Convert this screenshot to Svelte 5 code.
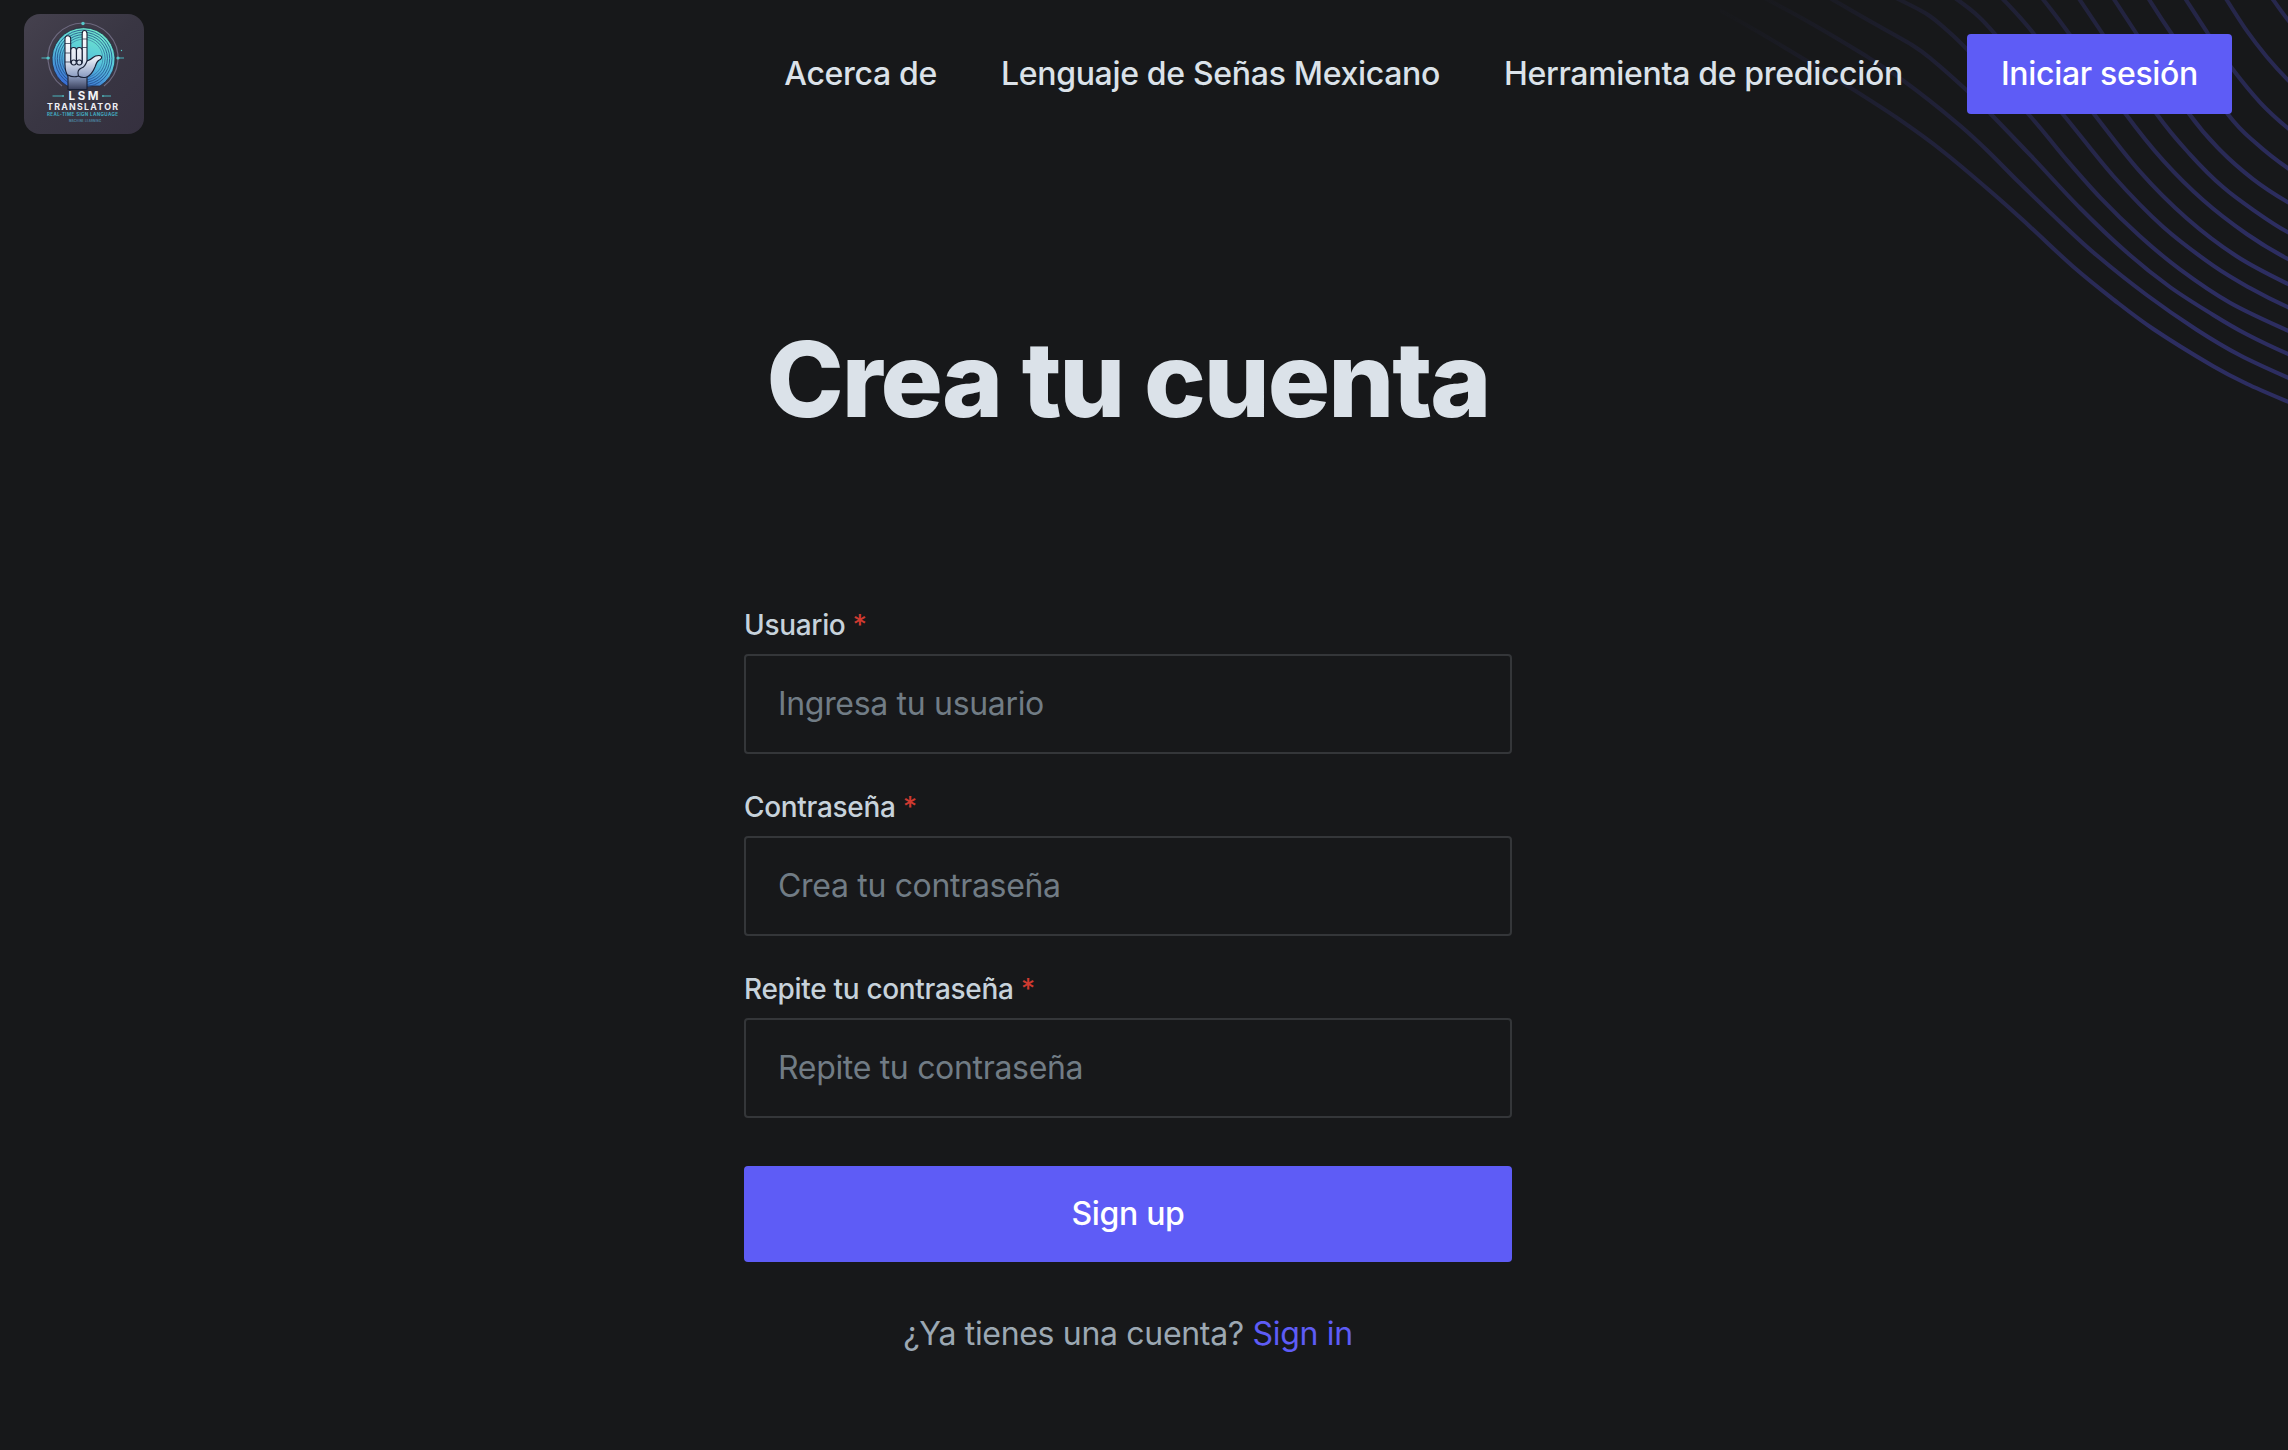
<script>
  const links = ['Acerca de', 'Lenguaje de Señas Mexicano', 'Herramienta de predicción'];
  const fields = [
    { id: 'user', label: 'Usuario', hint: 'Ingresa tu usuario', type: 'text' },
    { id: 'pass', label: 'Contraseña', hint: 'Crea tu contraseña', type: 'password' },
    { id: 'again', label: 'Repite tu contraseña', hint: 'Repite tu contraseña', type: 'password' }
  ];

  // Contour lines, in thirds of a pixel from the illustration's left edge.
  const contours = [
    [[-320, -45], [-220, 10], [-110, 70], [60, 170], [190, 250], [350, 353], [490, 455], [650, 590], [750, 680], [880, 800], [1000, 898], [1120, 987], [1300, 1099], [1400, 1151], [1524, 1205], [1600, 1235]],
    [[-120, -48], [-35, 0], [90, 68], [250, 163], [370, 242], [530, 368], [620, 450], [720, 550], [850, 675], [950, 766], [1100, 885], [1250, 989], [1380, 1066], [1524, 1133], [1600, 1163]],
    [[140, -12], [160, 0], [260, 58], [395, 134], [460, 182], [560, 271], [632, 342], [760, 475], [900, 624], [1040, 757], [1170, 861], [1300, 945], [1400, 1003], [1524, 1062], [1600, 1092]],
    [[340, -10], [440, 42], [500, 90], [560, 147], [745, 342], [850, 468], [960, 592], [1080, 709], [1200, 808], [1350, 908], [1524, 992], [1600, 1022]],
    [[520, -10], [585, 40], [645, 102], [848, 342], [1000, 528], [1150, 681], [1300, 797], [1410, 864], [1524, 922], [1600, 952]],
    [[662, -10], [762, 102], [942, 342], [1080, 515], [1220, 655], [1370, 769], [1524, 852], [1600, 882]],
    [[783, -10], [868, 102], [1037, 342], [1150, 482], [1270, 601], [1400, 702], [1524, 777], [1600, 807]],
    [[893, -10], [968, 102], [1130, 342], [1230, 463], [1330, 562], [1430, 637], [1524, 697], [1600, 730]],
    [[997, -10], [1070, 102], [1228, 342], [1320, 450], [1420, 538], [1524, 607], [1600, 645]],
    [[1102, -10], [1175, 102], [1343, 342], [1430, 431], [1524, 505], [1600, 550]],
    [[1212, -10], [1285, 102], [1356, 205], [1440, 307], [1524, 385], [1600, 440]],
    [[1334, -10], [1400, 92], [1460, 170], [1524, 240], [1600, 310]],
    [[1473, -10], [1524, 60], [1600, 150]]
  ];

  // Smooth curve through every point of a contour.
  function smooth(points) {
    const p = points.map(([x, y]) => [x / 3 + 60, y / 3]);
    let d = `M${p[0][0].toFixed(1)} ${p[0][1].toFixed(1)}`;
    for (let i = 0; i < p.length - 1; i++) {
      const a = p[i];
      const b = p[i + 1];
      const before = p[i - 1] ?? a;
      const after = p[i + 2] ?? b;
      const c = [
        a[0] + (b[0] - before[0]) / 6, a[1] + (b[1] - before[1]) / 6,
        b[0] - (after[0] - a[0]) / 6, b[1] - (after[1] - a[1]) / 6,
        b[0], b[1]
      ];
      d += 'C' + c.map((v) => v.toFixed(1)).join(' ');
    }
    return d;
  }
</script>

<div class="page">
  <svg class="waves" width="568" height="440" viewBox="0 0 568 440" aria-hidden="true">
    <defs>
      <linearGradient id="fade" gradientUnits="userSpaceOnUse" x1="90" y1="-60" x2="460" y2="310">
        <stop offset="0" stop-color="#5d5dff" stop-opacity="0.01" />
        <stop offset="1" stop-color="#5d5dff" stop-opacity="0.31" />
      </linearGradient>
    </defs>
    {#each contours as line}
      <path d={smooth(line)} fill="none" stroke="url(#fade)" stroke-width="4" />
    {/each}
  </svg>

  <header>
    <svg class="logo" viewBox="0 0 120 120" role="img" aria-label="LSM Translator">
      <defs>
        <linearGradient id="tile" x1="0" y1="0" x2="1" y2="1">
          <stop offset="0" stop-color="#45414e" />
          <stop offset="0.5" stop-color="#393643" />
          <stop offset="1" stop-color="#35303f" />
        </linearGradient>
        <linearGradient id="disc" x1="0.75" y1="0" x2="0.35" y2="1">
          <stop offset="0" stop-color="#74ecc6" />
          <stop offset="0.5" stop-color="#58c8dc" />
          <stop offset="1" stop-color="#3a6fd4" />
        </linearGradient>
        <linearGradient id="hand" gradientUnits="userSpaceOnUse" x1="0" y1="17" x2="0" y2="76">
          <stop offset="0" stop-color="#ffffff" />
          <stop offset="0.5" stop-color="#dfe6f2" />
          <stop offset="0.75" stop-color="#93a3c6" />
          <stop offset="1" stop-color="#343a56" />
        </linearGradient>
      </defs>
      <rect width="120" height="120" rx="16" fill="url(#tile)" />
      <path d="M38 72A35 35 0 1 1 80 72" fill="none" stroke="#6d697f" stroke-width="1.2" />
      <path d="M43 72A31.500 31.500 0 1 1 76 72Z" fill="url(#disc)" stroke="#20283f" stroke-width="0.800" />
      <g fill="none" stroke="#214a86" stroke-width="0.8">
        <circle cx="59.500" cy="44.500" r="28.500" />
        <circle cx="59.500" cy="44.500" r="26.200" />
        <circle cx="59.500" cy="44.500" r="23.900" />
        <circle cx="59.500" cy="44.500" r="21.600" opacity="0.8" />
        <circle cx="59.500" cy="44.500" r="19.300" opacity="0.5" />
      </g>
      <g stroke="#4bb4bd" stroke-width="1">
        <path d="M17.500 44H26M93 44H100" />
        <path d="M28.500 82H40M78 82H87" />
      </g>
      <g fill="#55c7c9">
        <circle cx="59" cy="9.500" r="1.700" />
        <circle cx="24" cy="44" r="1.600" />
        <circle cx="94" cy="44" r="1.600" />
        <circle cx="97.500" cy="36.500" r="0.700" />
        <circle cx="39" cy="82" r="0.800" />
        <circle cx="79" cy="82" r="0.800" />
      </g>
      <g fill="url(#hand)" stroke="#182036" stroke-width="1.100" stroke-linejoin="round">
        <path d="M44 75.500V62Q41 58 41 50V25Q41 21.800 43.800 21.800T46.700 25V49H58.200V19.500Q58.200 16.500 60.500 16.500T63 19.500V47Q67 45.500 69 43.500Q71 41.500 75 41.500Q78 41.500 77.500 44Q77 45.500 74.500 46.500Q72.500 48 71 53Q68 60.500 63 63V75.500Z" />
        <rect x="46.800" y="33.500" width="5.600" height="15" rx="2.700" />
        <rect x="52.500" y="33.500" width="5.600" height="15" rx="2.700" />
        <rect x="47.300" y="46" width="5" height="5" rx="2.400" />
        <rect x="52.800" y="46" width="5" height="5" rx="2.400" />
        <path d="M41 29.500H46.700M41 39H46.700M58.200 25H63M58.200 33.500H63M41 48H46.700" fill="none" stroke-width="0.700" />
        <path d="M54.500 62Q52.500 56 57.500 54Q61 53 63 47M44 61Q49 64 54.500 62Q58 64.500 63 63" fill="none" />
      </g>
      <g class="mark" text-anchor="middle">
        <text x="59.500" y="86" font-size="11.500" textLength="30" fill="#f3f4f8">LSM</text>
        <text x="58.500" y="95.500" font-size="8.800" textLength="71" fill="#eceef4">TRANSLATOR</text>
        <text x="58.500" y="101.800" font-size="4.500" textLength="71" fill="#43abc0">REAL-TIME SIGN LANGUAGE</text>
        <text x="61" y="107.800" font-size="2.800" textLength="32" fill="#4d87a5">MACHINE LEARNING</text>
      </g>
    </svg>
    <nav>
      {#each links as link}
        <a href="#top">{link}</a>
      {/each}
      <a class="cta" href="#top">Iniciar sesión</a>
    </nav>
  </header>

  <main>
    <h1>Crea tu cuenta</h1>
    <form>
      {#each fields as field}
        <div class="field">
          <label for={field.id}>{field.label} <span>*</span></label>
          <input id={field.id} type={field.type} placeholder={field.hint} />
        </div>
      {/each}
      <button type="button">Sign up</button>
    </form>
    <p>¿Ya tienes una cuenta? <a href="#top">Sign in</a></p>
  </main>
</div>

<style>
  :global(body) {
    margin: 0;
    background: #17181a;
  }
  .page {
    position: relative;
    box-sizing: border-box;
    height: 1450px;
    padding-right: 32px;
    overflow: hidden;
    background: #17181a;
    color: #dbe2e9;
    font-family: Inter, sans-serif;
    font-size: 32px;
    line-height: 48px;
    letter-spacing: -0.01em;
  }
  .waves {
    position: absolute;
    top: 0;
    right: 0;
  }
  header {
    position: relative;
    display: flex;
    align-items: center;
    justify-content: space-between;
    height: 148px;
    padding: 0 24px;
  }
  .logo {
    width: 120px;
    height: 120px;
    letter-spacing: 0;
  }
  .mark {
    font-family: Inter, sans-serif;
    font-weight: 700;
  }
  nav {
    display: flex;
    align-items: center;
    gap: 64px;
    font-weight: 500;
  }
  a {
    color: inherit;
    text-decoration: none;
  }
  nav .cta {
    padding: 16px 34px;
    border-radius: 4px;
    background: #5e5cf6;
    color: #fff;
  }
  main {
    position: relative;
    display: flex;
    flex-direction: column;
    align-items: center;
  }
  h1 {
    margin: 169px 0 163px;
    font-size: 104px;
    font-weight: 800;
    line-height: 124px;
    letter-spacing: -0.02em;
  }
  form {
    display: flex;
    flex-direction: column;
    width: 768px;
  }
  .field {
    display: flex;
    flex-direction: column;
    gap: 8px;
    margin-bottom: 32px;
  }
  label {
    color: #c7d2db;
    font-size: 28px;
    font-weight: 500;
    line-height: 42px;
  }
  label span {
    color: #cf3a30;
  }
  input {
    box-sizing: border-box;
    width: 100%;
    height: 100px;
    padding: 0 32px 1px;
    border: 2px solid #343639;
    border-radius: 4px;
    outline: none;
    background: transparent;
    color: #dbe2e9;
    font: inherit;
    letter-spacing: inherit;
  }
  input::placeholder {
    color: #717c85;
    opacity: 1;
  }
  button {
    height: 96px;
    margin-top: 16px;
    border: 0;
    border-radius: 4px;
    background: #5e5cf6;
    color: #fff;
    font: inherit;
    font-weight: 500;
    letter-spacing: inherit;
  }
  p {
    margin: 48px 0 0;
    color: #9ca8b3;
  }
  p a {
    color: #5e5cf6;
  }
</style>
